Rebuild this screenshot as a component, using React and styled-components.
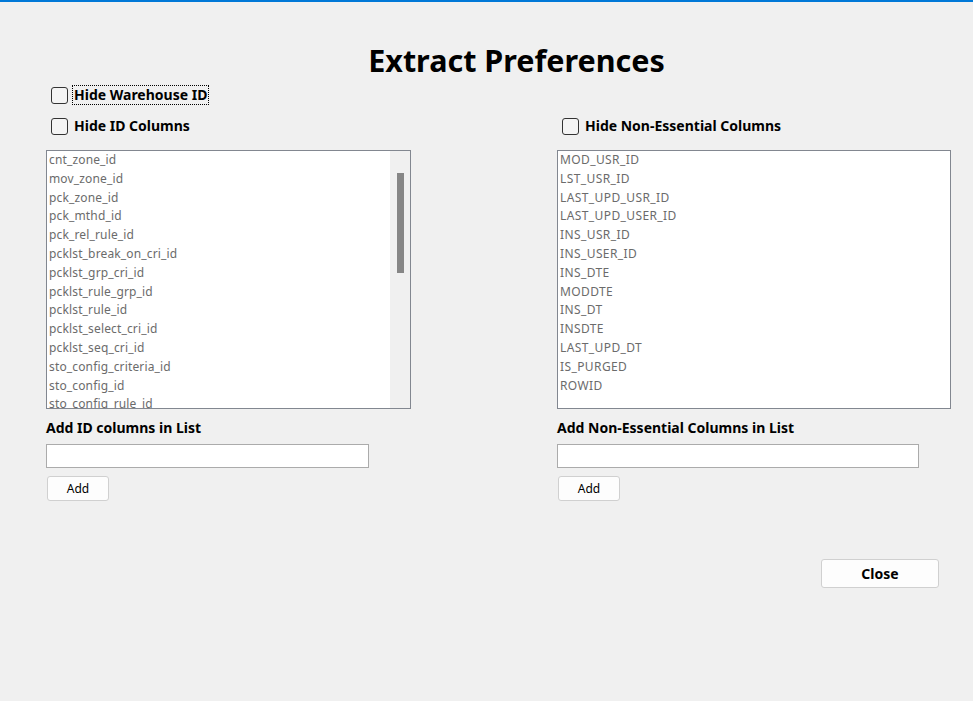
import React from "react";
import styled, { createGlobalStyle } from "styled-components";

const GlobalStyle = createGlobalStyle`
  html, body {
    margin: 0;
    padding: 0;
    background: #f0f0f0;
  }
  body {
    font-family: "Noto Sans", "Liberation Sans", sans-serif;
    color: #000;
  }
`;

const idColumns = [
  "cnt_zone_id",
  "mov_zone_id",
  "pck_zone_id",
  "pck_mthd_id",
  "pck_rel_rule_id",
  "pcklst_break_on_cri_id",
  "pcklst_grp_cri_id",
  "pcklst_rule_grp_id",
  "pcklst_rule_id",
  "pcklst_select_cri_id",
  "pcklst_seq_cri_id",
  "sto_config_criteria_id",
  "sto_config_id",
  "sto_config_rule_id",
];

const nonEssential = [
  "MOD_USR_ID",
  "LST_USR_ID",
  "LAST_UPD_USR_ID",
  "LAST_UPD_USER_ID",
  "INS_USR_ID",
  "INS_USER_ID",
  "INS_DTE",
  "MODDTE",
  "INS_DT",
  "INSDTE",
  "LAST_UPD_DT",
  "IS_PURGED",
  "ROWID",
];

const Window = styled.div`
  box-sizing: border-box;
  height: 701px;
  border-top: 2px solid #0078d7;
  background: #f0f0f0;
  padding: 0 22px 0 46px;
  display: flex;
  flex-direction: column;
`;

const Title = styled.h1`
  margin: 38px 0 0;
  padding-left: 36px;
  font-size: 30.5px;
  line-height: 40px;
  font-weight: 700;
  text-align: center;
`;

const CheckRow = styled.label`
  display: flex;
  align-items: center;
  gap: 4px;
  height: 22px;
  margin: ${(p) => p.margin || "0"};
  padding-left: 5px;
  font-size: 14px;
  font-weight: 700;
`;

const Box = styled.span`
  box-sizing: border-box;
  width: 17px;
  height: 17px;
  border: 1px solid #333;
  border-radius: 3px;
  background: #f4f4f4;
`;

const CheckText = styled.span`
  padding: 0 1px;
  border: 1px dotted ${(p) => (p.focused ? "#000" : "transparent")};
  line-height: 18px;
`;

const Columns = styled.div`
  display: grid;
  grid-template-columns: 365px 394px;
  column-gap: 146px;
  margin-top: 9px;
`;

const Panel = styled.div`
  display: flex;
  flex-direction: column;
`;

const ListBox = styled.div`
  box-sizing: border-box;
  margin-top: 13px;
  height: 259px;
  border: 1px solid #828790;
  background: #fff;
  display: flex;
  overflow: hidden;
`;

const Items = styled.ul`
  list-style: none;
  margin: 0;
  padding: 0 0 0 2px;
  flex: 1;
`;

const Item = styled.li`
  height: 18.8px;
  line-height: 18.8px;
  font-size: 12px;
  color: #6b6b6b;
  white-space: nowrap;
  letter-spacing: ${(p) => (p.caps ? "0.4px" : "0.15px")};
`;

const ScrollTrack = styled.div`
  width: 20px;
  background: #f0f0f0;
  padding-top: 22px;
  display: flex;
  justify-content: center;
`;

const ScrollThumb = styled.div`
  width: 7px;
  height: 100px;
  background: #868686;
`;

const FieldLabel = styled.div`
  margin-top: 10px;
  font-size: 14px;
  font-weight: 700;
  line-height: 18px;
`;

const TextInput = styled.input`
  box-sizing: border-box;
  margin-top: 7px;
  width: ${(p) => p.width}px;
  height: 24px;
  border: 1px solid #ababab;
  background: #fff;
  outline: none;
`;

const Button = styled.button`
  box-sizing: border-box;
  width: ${(p) => p.width}px;
  height: ${(p) => p.height}px;
  margin: ${(p) => p.margin || "0"};
  border: 1px solid #d0d0d0;
  border-radius: 3px;
  background: #fdfdfd;
  font-family: "Noto Sans", "Liberation Sans", sans-serif;
  font-size: ${(p) => (p.bold ? "14px" : "12px")};
  font-weight: ${(p) => (p.bold ? 700 : 400)};
  color: #000;
  padding: 0;
`;

const Footer = styled.div`
  display: flex;
  justify-content: flex-end;
  padding-right: 12px;
  margin-top: 58px;
`;

const Check = ({ label, focused, margin }) => (
  <CheckRow margin={margin}>
    <Box />
    <CheckText focused={focused}>{label}</CheckText>
  </CheckRow>
);

const App = () => (
  <>
    <GlobalStyle />
    <Window>
      <Title>Extract Preferences</Title>
      <Check label="Hide Warehouse ID" focused margin="4px 0 0" />
      <Columns>
        <Panel>
          <Check label="Hide ID Columns" />
          <ListBox>
            <Items>
              {idColumns.map((c) => (
                <Item key={c}>{c}</Item>
              ))}
            </Items>
            <ScrollTrack>
              <ScrollThumb />
            </ScrollTrack>
          </ListBox>
          <FieldLabel>Add ID columns in List</FieldLabel>
          <TextInput width={323} />
          <Button width={62} height={25} margin="8px 0 0 1px">
            Add
          </Button>
        </Panel>
        <Panel>
          <Check label="Hide Non-Essential Columns" />
          <ListBox>
            <Items>
              {nonEssential.map((c) => (
                <Item key={c} caps>
                  {c}
                </Item>
              ))}
            </Items>
          </ListBox>
          <FieldLabel>Add Non-Essential Columns in List</FieldLabel>
          <TextInput width={362} />
          <Button width={62} height={25} margin="8px 0 0 1px">
            Add
          </Button>
        </Panel>
      </Columns>
      <Footer>
        <Button width={118} height={29} bold>
          Close
        </Button>
      </Footer>
    </Window>
  </>
);

export default App;
